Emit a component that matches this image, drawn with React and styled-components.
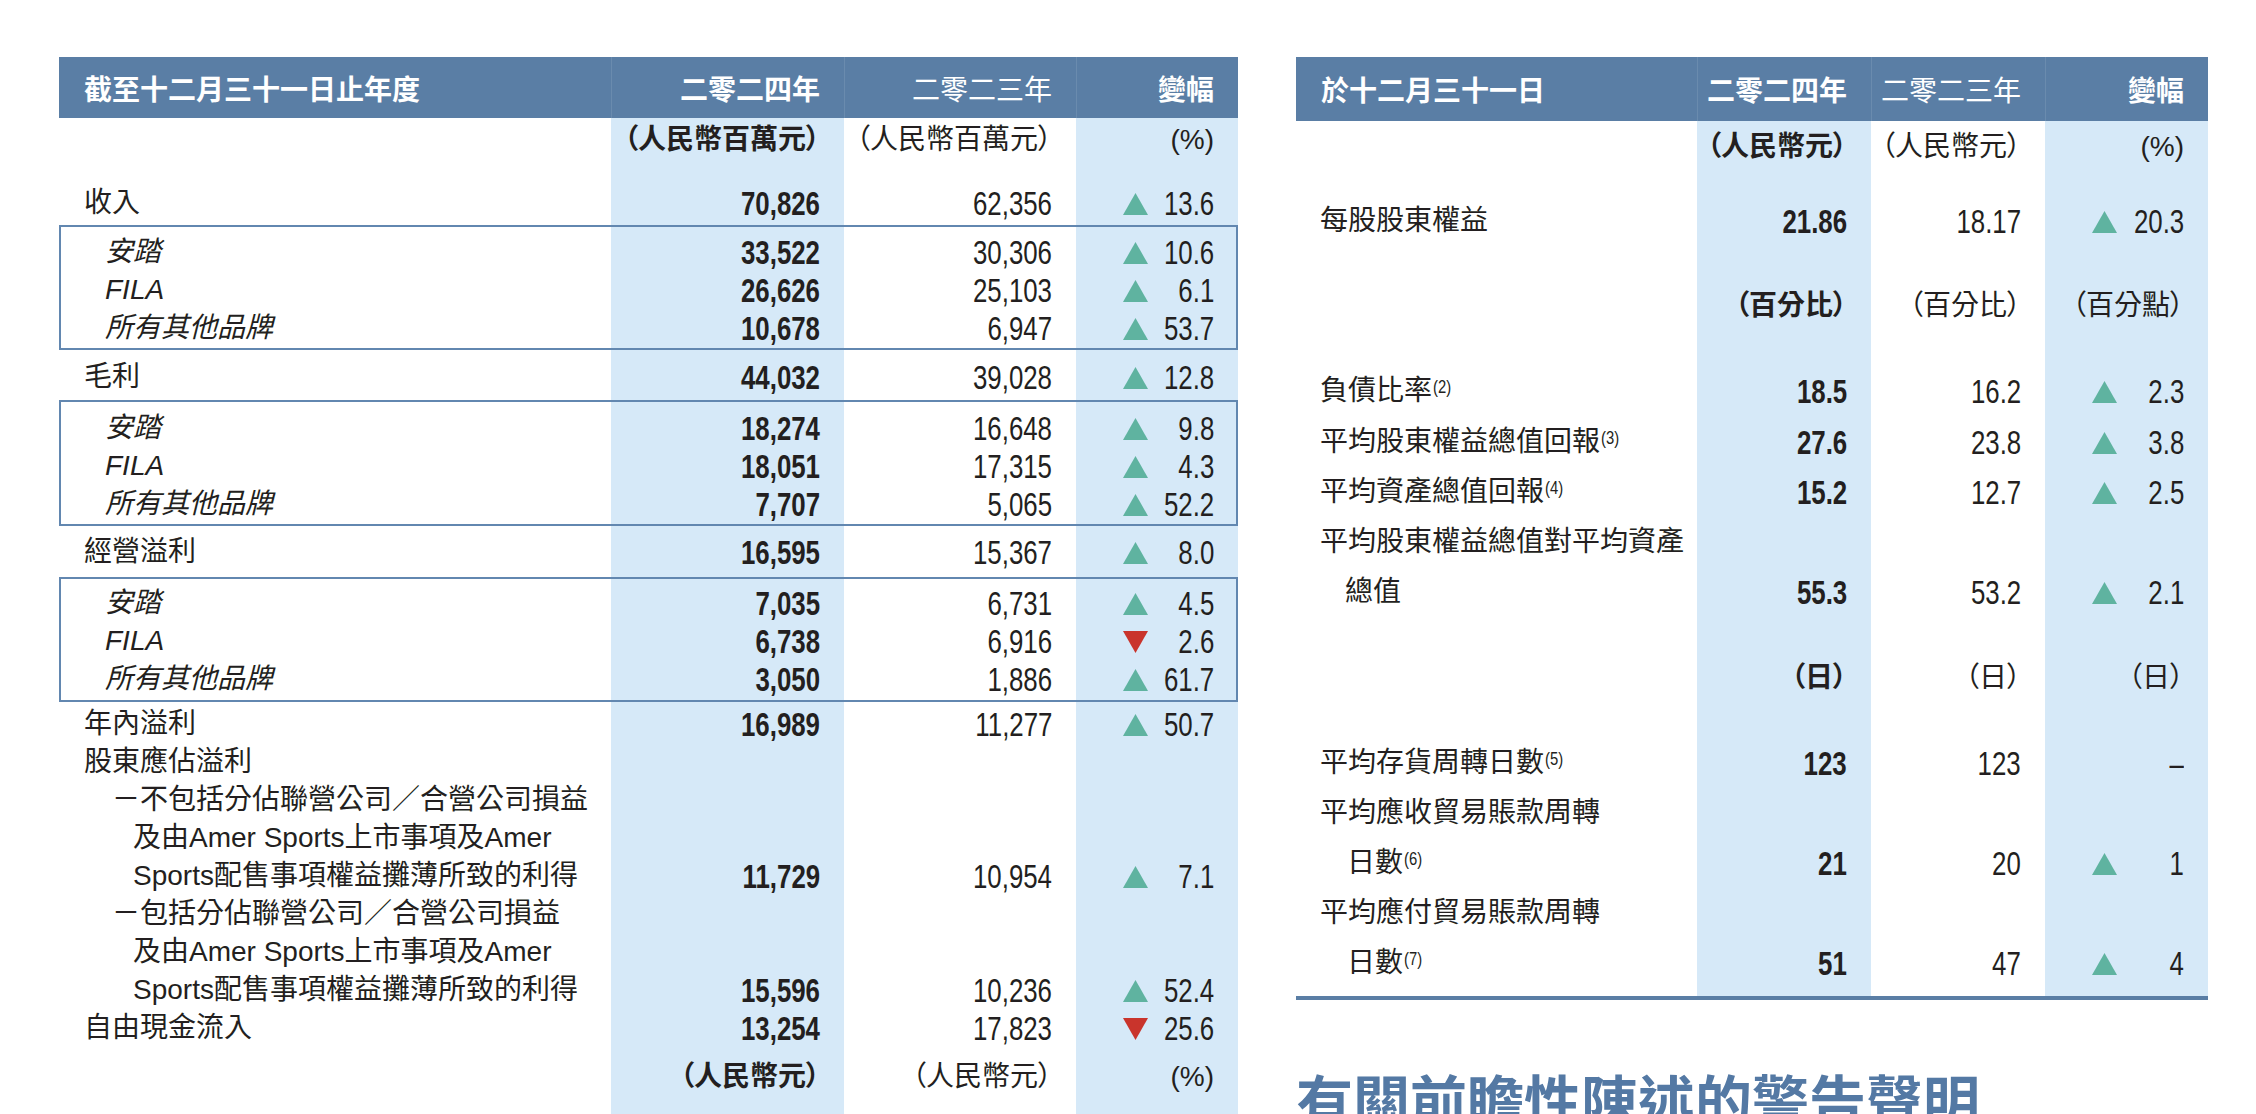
import React from 'react';
import styled, { createGlobalStyle } from 'styled-components';

const BLUE = '#5a7ea5';
const BOX = '#6287b0';
const TINT = '#d6e9f8';
const INK = '#231f20';
const UP = '#5fb3a0';
const DOWN = '#c9342c';

const CJK = '"Noto Sans CJK TC", "Noto Sans CJK SC", sans-serif';
const LATIN = `"Liberation Sans", ${CJK}`;

const LEFT_COLS = [552, 233, 232, 162];
const RIGHT_COLS = [401, 174, 174, 163];

const sum = (cols) => cols.reduce((a, b) => a + b, 0);

// column tint stripes painted behind the whole table body
const stripes = (cols) => {
  const x1 = cols[0];
  const x2 = x1 + cols[1];
  const x3 = x2 + cols[2];
  const x4 = x3 + cols[3];
  return `linear-gradient(to right, transparent 0 ${x1}px, ${TINT} ${x1}px ${x2}px, transparent ${x2}px ${x3}px, ${TINT} ${x3}px ${x4}px)`;
};

const GlobalStyle = createGlobalStyle`
  html, body {
    margin: 0;
    background: #ffffff;
    overflow: hidden;
  }
  body {
    font-family: ${CJK};
    color: ${INK};
  }
`;

const Arrow = ({ dir }) => (
  <ArrowIcon viewBox="0 0 25 22" width="25" height="22">
    {dir === 'up'
      ? <polygon points="0,22 12.5,0 25,22" fill={UP} />
      : <polygon points="0,0 25,0 12.5,22" fill={DOWN} />}
  </ArrowIcon>
);

const DataRow = ({ cols, label, a, b, dir, pct, italic, indent = 25, pt = 0 }) => (
  <Row $pt={pt}>
    <Label $w={cols[0]} $indent={indent} $italic={italic}>{label}</Label>
    <Num $w={cols[1]} $bold>{a && <Fig>{a}</Fig>}</Num>
    <Num $w={cols[2]}>{b && <Fig>{b}</Fig>}</Num>
    <Change $w={cols[3]} $solo={!dir}>
      {dir && <Arrow dir={dir} />}
      {pct && <Fig>{pct}</Fig>}
    </Change>
  </Row>
);

const UnitRow = ({ cols, a, b, c, pt = 0 }) => (
  <Row $pt={pt}>
    <Label $w={cols[0]} />
    <Unit $w={cols[1]} $bold>{a}</Unit>
    <Unit $w={cols[2]}>{b}</Unit>
    <Unit $w={cols[3]}>{c}</Unit>
  </Row>
);

const Head = ({ cols, title, height }) => (
  <HeaderBar $h={height}>
    <HeadCell $w={cols[0]} $left>{title}</HeadCell>
    <HeadCell $w={cols[1]}>二零二四年</HeadCell>
    <HeadCell $w={cols[2]} $light>二零二三年</HeadCell>
    <HeadCell $w={cols[3]}>變幅</HeadCell>
  </HeaderBar>
);

const BrandGroup = ({ rows, pt, pb }) => (
  <Group $pt={pt} $pb={pb}>
    {rows.map(([name, a, b, dir, pct]) => (
      <DataRow key={name} cols={LEFT_COLS} label={name} a={a} b={b} dir={dir} pct={pct} italic indent={46} />
    ))}
  </Group>
);

const App = () => {
  const L = LEFT_COLS;
  const R = RIGHT_COLS;
  return (
    <>
      <GlobalStyle />
      <Page>
        <Table $w={sum(L)}>
          <Head cols={L} title="截至十二月三十一日止年度" height={61} />
          <Body $cols={L} $lh={38} $pb={40}>
            <UnitRow cols={L} a="（人民幣百萬元）" b="（人民幣百萬元）" c="(%)" pt={3} />
            <DataRow cols={L} label="收入" a="70,826" b="62,356" dir="up" pct="13.6" pt={25} />
            <Spacer $h={3} />
            <BrandGroup
              pt={8}
              pb={3}
              rows={[
                ['安踏', '33,522', '30,306', 'up', '10.6'],
                ['FILA', '26,626', '25,103', 'up', '6.1'],
                ['所有其他品牌', '10,678', '6,947', 'up', '53.7'],
              ]}
            />
            <DataRow cols={L} label="毛利" a="44,032" b="39,028" dir="up" pct="12.8" pt={8} />
            <Spacer $h={4} />
            <BrandGroup
              pt={9}
              pb={3}
              rows={[
                ['安踏', '18,274', '16,648', 'up', '9.8'],
                ['FILA', '18,051', '17,315', 'up', '4.3'],
                ['所有其他品牌', '7,707', '5,065', 'up', '52.2'],
              ]}
            />
            <DataRow cols={L} label="經營溢利" a="16,595" b="15,367" dir="up" pct="8.0" pt={7} />
            <Spacer $h={6} />
            <BrandGroup
              pt={7}
              pb={4}
              rows={[
                ['安踏', '7,035', '6,731', 'up', '4.5'],
                ['FILA', '6,738', '6,916', 'down', '2.6'],
                ['所有其他品牌', '3,050', '1,886', 'up', '61.7'],
              ]}
            />
            <DataRow cols={L} label="年內溢利" a="16,989" b="11,277" dir="up" pct="50.7" pt={3} />
            <DataRow cols={L} label="股東應佔溢利" />
            <DataRow
              cols={L}
              indent={0}
              label={
                <>
                  <Line $indent={53}>－不包括分佔聯營公司／合營公司損益</Line>
                  <Line $indent={74}>及由Amer Sports上市事項及Amer</Line>
                  <Line $indent={74}>Sports配售事項權益攤薄所致的利得</Line>
                </>
              }
              a="11,729"
              b="10,954"
              dir="up"
              pct="7.1"
            />
            <DataRow
              cols={L}
              indent={0}
              label={
                <>
                  <Line $indent={53}>－包括分佔聯營公司／合營公司損益</Line>
                  <Line $indent={74}>及由Amer Sports上市事項及Amer</Line>
                  <Line $indent={74}>Sports配售事項權益攤薄所致的利得</Line>
                </>
              }
              a="15,596"
              b="10,236"
              dir="up"
              pct="52.4"
            />
            <DataRow cols={L} label="自由現金流入" a="13,254" b="17,823" dir="down" pct="25.6" />
            <UnitRow cols={L} a="（人民幣元）" b="（人民幣元）" c="(%)" pt={11} />
          </Body>
        </Table>

        <Side>
          <Table $w={sum(R)}>
            <Head cols={R} title="於十二月三十一日" height={64} />
            <Body $cols={R} $lh={50} $pb={8} $rule>
              <UnitRow cols={R} a="（人民幣元）" b="（人民幣元）" c="(%)" pt={1} />
              <DataRow cols={R} label="每股股東權益" a="21.86" b="18.17" dir="up" pct="20.3" indent={24} pt={24} />
              <UnitRow cols={R} a="（百分比）" b="（百分比）" c="（百分點）" pt={35} />
              <DataRow cols={R} label={<>負債比率<Note>(2)</Note></>} a="18.5" b="16.2" dir="up" pct="2.3" indent={24} pt={35} />
              <DataRow cols={R} label={<>平均股東權益總值回報<Note>(3)</Note></>} a="27.6" b="23.8" dir="up" pct="3.8" indent={24} pt={1} />
              <DataRow cols={R} label={<>平均資產總值回報<Note>(4)</Note></>} a="15.2" b="12.7" dir="up" pct="2.5" indent={24} />
              <DataRow
                cols={R}
                indent={0}
                label={
                  <>
                    <Line $indent={24}>平均股東權益總值對平均資產</Line>
                    <Line $indent={49}>總值</Line>
                  </>
                }
                a="55.3"
                b="53.2"
                dir="up"
                pct="2.1"
              />
              <UnitRow cols={R} a="（日）" b="（日）" c="（日）" pt={36} />
              <DataRow cols={R} label={<>平均存貨周轉日數<Note>(5)</Note></>} a="123" b="123" pct="–" indent={24} pt={35} />
              <DataRow
                cols={R}
                indent={0}
                label={
                  <>
                    <Line $indent={24}>平均應收貿易賬款周轉</Line>
                    <Line $indent={51}>日數<Note>(6)</Note></Line>
                  </>
                }
                a="21"
                b="20"
                dir="up"
                pct="1"
              />
              <DataRow
                cols={R}
                indent={0}
                label={
                  <>
                    <Line $indent={24}>平均應付貿易賬款周轉</Line>
                    <Line $indent={51}>日數<Note>(7)</Note></Line>
                  </>
                }
                a="51"
                b="47"
                dir="up"
                pct="4"
              />
            </Body>
          </Table>
          <Heading>有關前瞻性陳述的警告聲明</Heading>
        </Side>
      </Page>
    </>
  );
};

export default App;

const Page = styled.div`
  display: flex;
  align-items: flex-start;
  gap: 58px;
  height: 1114px;
  padding: 57px 0 0 59px;
  box-sizing: border-box;
  overflow: hidden;
`;

const Side = styled.div`
  display: flex;
  flex-direction: column;
`;

const Table = styled.section`
  width: ${(p) => p.$w}px;
  display: flex;
  flex-direction: column;
`;

const HeaderBar = styled.div`
  display: flex;
  height: ${(p) => p.$h}px;
  background: ${BLUE};
  color: #ffffff;
  font-size: 28px;
`;

const HeadCell = styled.div`
  width: ${(p) => p.$w}px;
  box-sizing: border-box;
  display: flex;
  align-items: center;
  justify-content: ${(p) => (p.$left ? 'flex-start' : 'flex-end')};
  padding: 0 24px 0 ${(p) => (p.$left ? 25 : 24)}px;
  font-weight: ${(p) => (p.$light ? 400 : 700)};
  white-space: nowrap;

  & + & {
    border-left: 1px solid rgba(255, 255, 255, 0.1);
  }
`;

const Body = styled.div`
  background: ${(p) => stripes(p.$cols)};
  line-height: ${(p) => p.$lh}px;
  padding-bottom: ${(p) => p.$pb}px;
  border-bottom: ${(p) => (p.$rule ? `4px solid ${BLUE}` : 'none')};
`;

const Row = styled.div`
  display: flex;
  align-items: flex-end;
  padding-top: ${(p) => p.$pt}px;
`;

const Spacer = styled.div`
  height: ${(p) => p.$h}px;
`;

const Group = styled.div`
  box-shadow: inset 0 0 0 2px ${BOX};
  padding: ${(p) => p.$pt}px 0 ${(p) => p.$pb}px;
`;

const Label = styled.div`
  width: ${(p) => p.$w}px;
  box-sizing: border-box;
  padding-left: ${(p) => p.$indent || 0}px;
  font-family: ${LATIN};
  font-size: 28px;
  font-style: ${(p) => (p.$italic ? 'italic' : 'normal')};
  white-space: nowrap;
`;

const Line = styled.div`
  padding-left: ${(p) => p.$indent}px;
`;

const Note = styled.sup`
  display: inline-block;
  font-family: ${LATIN};
  font-size: 19px;
  line-height: 0;
  vertical-align: 7px;
  margin-left: 1px;
  transform: scaleX(0.78);
  transform-origin: left center;
`;

const Num = styled.div`
  width: ${(p) => p.$w}px;
  box-sizing: border-box;
  padding-right: 24px;
  text-align: right;
  font-family: ${LATIN};
  font-size: 34px;
  font-weight: ${(p) => (p.$bold ? 700 : 400)};
  white-space: nowrap;
`;

/* condensed figures, like the report's narrow numeral face */
const Fig = styled.span`
  display: inline-block;
  transform: scaleX(0.76);
  transform-origin: right center;
`;

const Unit = styled(Num)`
  font-size: 28px;
  font-feature-settings: "palt";
`;

const Change = styled.div`
  width: ${(p) => p.$w}px;
  box-sizing: border-box;
  display: flex;
  align-items: baseline;
  justify-content: ${(p) => (p.$solo ? 'flex-end' : 'space-between')};
  padding: 0 24px 0 47px;
  font-family: ${LATIN};
  font-size: 34px;
  white-space: nowrap;
`;

const ArrowIcon = styled.svg`
  display: block;
  flex: none;
`;

const Heading = styled.h2`
  margin: 64px 0 0;
  font-family: ${CJK};
  font-size: 57px;
  font-weight: 700;
  line-height: 68px;
  color: #5479a4;
  white-space: nowrap;
`;
